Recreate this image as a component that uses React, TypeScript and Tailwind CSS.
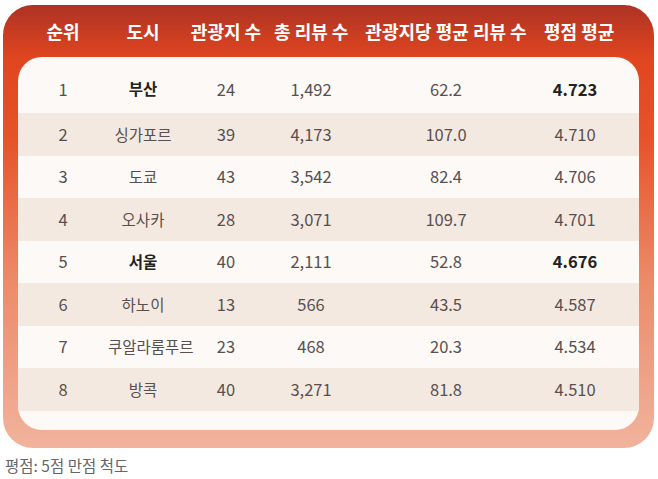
const rows = [
  { rank: 1, city: "부산", spots: 24, reviews: "1,492", avg: "62.2", score: "4.723", top: true },
  { rank: 2, city: "싱가포르", spots: 39, reviews: "4,173", avg: "107.0", score: "4.710" },
  { rank: 3, city: "도쿄", spots: 43, reviews: "3,542", avg: "82.4", score: "4.706" },
  { rank: 4, city: "오사카", spots: 28, reviews: "3,071", avg: "109.7", score: "4.701" },
  { rank: 5, city: "서울", spots: 40, reviews: "2,111", avg: "52.8", score: "4.676", top: true },
  { rank: 6, city: "하노이", spots: 13, reviews: "566", avg: "43.5", score: "4.587" },
  { rank: 7, city: "쿠알라룸푸르", spots: 23, reviews: "468", avg: "20.3", score: "4.534" },
  { rank: 8, city: "방콕", spots: 40, reviews: "3,271", avg: "81.8", score: "4.510" },
];

const cols = "grid grid-cols-[90px_70px_96px_74px_196px_62px_1fr] items-center";

const App = () => {
  return (
    <div
      className="w-[658px] h-[479px] bg-white"
      style={{ fontFamily: '"Noto Sans CJK KR", "Noto Sans", sans-serif' }}
    >
      <div className="pt-[5px] pl-[3px] pr-[4px]">
        <div className="rounded-[30px] bg-[linear-gradient(180deg,#ad3224_0%,#e0461f_12%,#e6532a_30%,#ec8a68_62%,#f1b39d_100%)] px-[15px] pb-[18px]">
          <div className={`${cols} h-[52px] text-white font-bold text-[18px] whitespace-nowrap`}>
            <div className="text-center">순위</div>
            <div className="text-center">도시</div>
            <div className="text-center">관광지 수</div>
            <div className="text-center">총 리뷰 수</div>
            <div className="text-center">관광지당 평균 리뷰 수</div>
            <div className="text-center">평점 평균</div>
            <div />
          </div>
          <div className="rounded-[24px] bg-[#fcf9f6] pt-[8px] pb-[19px] overflow-hidden">
            {rows.map((r, i) => (
              <div
                key={r.rank}
                className={`${cols} ${i === 0 ? "h-[48px]" : "h-[42.5px]"} text-[16.5px] text-[#585050] whitespace-nowrap ${
                  i % 2 === 1 ? "bg-[#f4e9e0]" : ""
                }`}
              >
                <div className="text-center">{r.rank}</div>
                <div className={`text-center text-[15.5px] ${r.top ? "font-bold text-[#222]" : ""}`}>{r.city}</div>
                <div className="text-center">{r.spots}</div>
                <div className="text-center">{r.reviews}</div>
                <div className="text-center">{r.avg}</div>
                <div className={`text-center ${r.top ? "font-bold text-[#222]" : ""}`}>{r.score}</div>
                <div />
              </div>
            ))}
          </div>
        </div>
        <div className="mt-[6px] ml-[2px] text-[15.5px] text-[#666]">평점: 5점 만점 척도</div>
      </div>
    </div>
  );
};

export default App;
